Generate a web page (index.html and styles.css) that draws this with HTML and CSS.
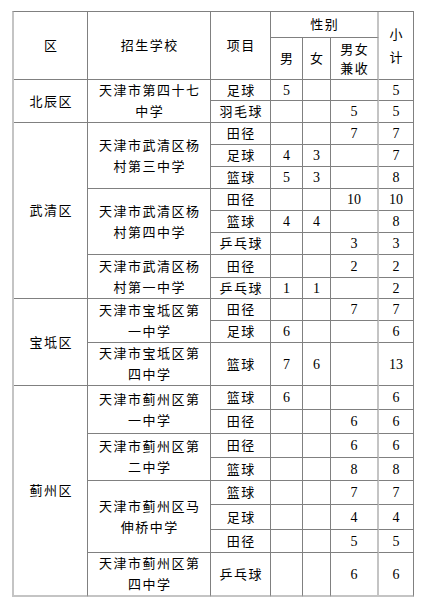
FILE: index.html
```html
<!DOCTYPE html>
<html lang="zh">
<head>
<meta charset="utf-8">
<title>招生学校</title>
<link rel="stylesheet" href="styles.css">
</head>
<body>
<table class="grid">
  <colgroup>
    <col class="c1"><col class="c2"><col class="c3"><col class="c4"><col class="c5"><col class="c6"><col class="c7">
  </colgroup>
  <tr class="h26">
    <td rowspan="2" class="t">区</td>
    <td rowspan="2" class="t">招生学校</td>
    <td rowspan="2" class="t">项目</td>
    <td colspan="3" class="t jz">性别</td>
    <td rowspan="2" class="t xj">小<br>计</td>
  </tr>
  <tr class="h42">
    <td class="t">男</td>
    <td class="t">女</td>
    <td class="t jz">男女<br>兼收</td>
  </tr>

  <tr class="h21">
    <td rowspan="2" class="t">北辰区</td>
    <td rowspan="2" class="t s">天津市第四十七<br>中学</td>
    <td class="t">足球</td><td>5</td><td></td><td class="jz"></td><td>5</td>
  </tr>
  <tr class="h22">
    <td class="t">羽毛球</td><td></td><td></td><td class="jz">5</td><td>5</td>
  </tr>

  <tr class="h22">
    <td rowspan="8" class="t">武清区</td>
    <td rowspan="3" class="t s">天津市武清区杨<br>村第三中学</td>
    <td class="t">田径</td><td></td><td></td><td class="jz">7</td><td>7</td>
  </tr>
  <tr class="h22">
    <td class="t">足球</td><td>4</td><td>3</td><td class="jz"></td><td>7</td>
  </tr>
  <tr class="h22">
    <td class="t">篮球</td><td>5</td><td>3</td><td class="jz"></td><td>8</td>
  </tr>
  <tr class="h22">
    <td rowspan="3" class="t s">天津市武清区杨<br>村第四中学</td>
    <td class="t">田径</td><td></td><td></td><td class="jz">10</td><td>10</td>
  </tr>
  <tr class="h22">
    <td class="t">篮球</td><td>4</td><td>4</td><td class="jz"></td><td>8</td>
  </tr>
  <tr class="h22">
    <td class="t">乒乓球</td><td></td><td></td><td class="jz">3</td><td>3</td>
  </tr>
  <tr class="h23">
    <td rowspan="2" class="t s">天津市武清区杨<br>村第一中学</td>
    <td class="t">田径</td><td></td><td></td><td class="jz">2</td><td>2</td>
  </tr>
  <tr class="h21">
    <td class="t">乒乓球</td><td>1</td><td>1</td><td class="jz"></td><td>2</td>
  </tr>

  <tr class="h22">
    <td rowspan="3" class="t">宝坻区</td>
    <td rowspan="2" class="t s">天津市宝坻区第<br>一中学</td>
    <td class="t">田径</td><td></td><td></td><td class="jz">7</td><td>7</td>
  </tr>
  <tr class="h22">
    <td class="t">足球</td><td>6</td><td></td><td class="jz"></td><td>6</td>
  </tr>
  <tr class="h41">
    <td class="t s">天津市宝坻区第<br>四中学</td>
    <td class="t">篮球</td><td>7</td><td>6</td><td class="jz"></td><td>13</td>
  </tr>

  <tr class="h24">
    <td rowspan="8" class="t last">蓟州区</td>
    <td rowspan="2" class="t s">天津市蓟州区第<br>一中学</td>
    <td class="t">篮球</td><td>6</td><td></td><td class="jz"></td><td>6</td>
  </tr>
  <tr class="h24">
    <td class="t">田径</td><td></td><td></td><td class="jz">6</td><td>6</td>
  </tr>
  <tr class="h24">
    <td rowspan="2" class="t s">天津市蓟州区第<br>二中学</td>
    <td class="t">田径</td><td></td><td></td><td class="jz">6</td><td>6</td>
  </tr>
  <tr class="h23">
    <td class="t">篮球</td><td></td><td></td><td class="jz">8</td><td>8</td>
  </tr>
  <tr class="h24">
    <td rowspan="3" class="t s">天津市蓟州区马<br>伸桥中学</td>
    <td class="t">篮球</td><td></td><td></td><td class="jz">7</td><td>7</td>
  </tr>
  <tr class="h25">
    <td class="t">足球</td><td></td><td></td><td class="jz">4</td><td>4</td>
  </tr>
  <tr class="h23">
    <td class="t">田径</td><td></td><td></td><td class="jz">5</td><td>5</td>
  </tr>
  <tr class="lastrow">
    <td class="t s">天津市蓟州区第<br>四中学</td>
    <td class="t">乒乓球</td><td></td><td></td><td class="jz">6</td><td>6</td>
  </tr>
</table>
</body>
</html>
```

FILE: styles.css
```css
html, body {
  margin: 0;
  padding: 0;
  background: #ffffff;
}

body {
  padding: 11px 0 0 12px;
  font-family: "Liberation Serif", "Noto Sans CJK SC", serif;
  font-size: 14px;
  color: #000000;
}

.grid {
  border-collapse: separate;
  border-spacing: 0;
  table-layout: fixed;
  width: 402px;
  border-top: 1px solid #808080;
  border-left: 2px solid #c4c4c4;
}

.c1 { width: 74px; }
.c2 { width: 123px; }
.c3 { width: 60px; }
.c4 { width: 32px; }
.c5 { width: 28px; }
.c6 { width: 48px; }
.c7 { width: 35px; }

.grid td {
  padding: 0;
  text-align: center;
  vertical-align: middle;
  line-height: 19px;
  border-right: 1px solid #808080;
  border-bottom: 1px solid #808080;
  box-sizing: border-box;
}

.grid td.t {
  font-size: 13px;
  letter-spacing: 1.5px;
  padding-left: 1.5px;
}

.grid td.s {
  line-height: 21px;
}

.grid td.xj {
  line-height: 23px;
}

.grid td.jz {
  border-right: 2px solid #c4c4c4;
}

.grid td.last,
.lastrow td {
  border-bottom: 2px solid #c4c4c4;
}

.h21 { height: 21px; }
.h22 { height: 22px; }
.h23 { height: 23px; }
.h24 { height: 24px; }
.h25 { height: 25px; }
.h26 { height: 26px; }
.h41 { height: 41px; }
.h42 { height: 42px; }
.lastrow { height: 42px; }
```
